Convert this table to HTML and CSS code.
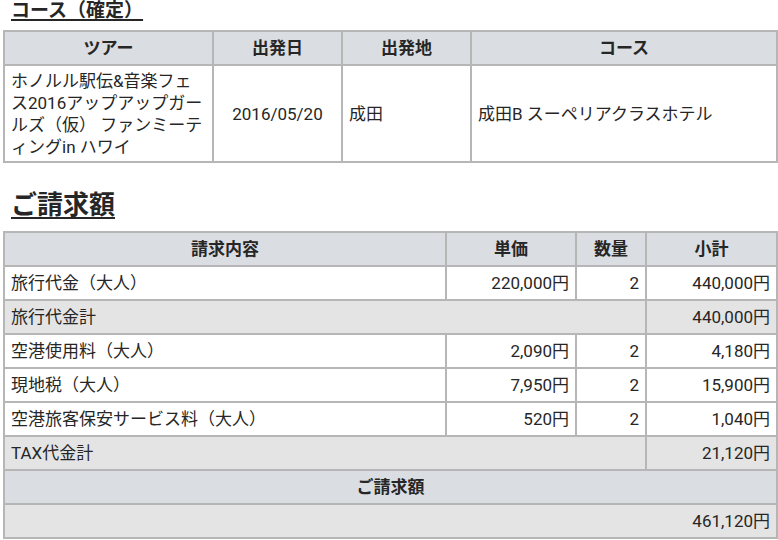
FILE: index.html
```html
<!DOCTYPE html>
<html lang="ja">
<head>
<meta charset="utf-8">
<link rel="stylesheet" href="styles.css">
</head>
<body>
<div class="page">
  <h2 class="title-sm">コース（確定）</h2>
  <table class="grid course">
    <colgroup>
      <col class="c-tour"><col class="c-date"><col class="c-from"><col class="c-course">
    </colgroup>
    <thead>
      <tr class="head"><th>ツアー</th><th>出発日</th><th>出発地</th><th>コース</th></tr>
    </thead>
    <tbody>
      <tr class="tall">
        <td>ホノルル駅伝&amp;音楽フェス2016アップアップガールズ（仮） ファンミーティングin ハワイ</td>
        <td class="center">2016/05/20</td>
        <td>成田</td>
        <td>成田B スーペリアクラスホテル</td>
      </tr>
    </tbody>
  </table>

  <h2 class="title-lg">ご請求額</h2>
  <table class="grid bill">
    <colgroup>
      <col class="c-item"><col class="c-unit"><col class="c-qty"><col class="c-sub">
    </colgroup>
    <thead>
      <tr class="head"><th>請求内容</th><th>単価</th><th>数量</th><th>小計</th></tr>
    </thead>
    <tbody>
      <tr><td>旅行代金（大人）</td><td class="num">220,000円</td><td class="num">2</td><td class="num">440,000円</td></tr>
      <tr class="total"><td colspan="3">旅行代金計</td><td class="num">440,000円</td></tr>
      <tr><td>空港使用料（大人）</td><td class="num">2,090円</td><td class="num">2</td><td class="num">4,180円</td></tr>
      <tr><td>現地税（大人）</td><td class="num">7,950円</td><td class="num">2</td><td class="num">15,900円</td></tr>
      <tr><td>空港旅客保安サービス料（大人）</td><td class="num">520円</td><td class="num">2</td><td class="num">1,040円</td></tr>
      <tr class="total"><td colspan="3">TAX代金計</td><td class="num">21,120円</td></tr>
      <tr class="head"><th colspan="4">ご請求額</th></tr>
      <tr class="total"><td colspan="4" class="num">461,120円</td></tr>
    </tbody>
  </table>
</div>
</body>
</html>
```

FILE: styles.css
```css
html, body {
  margin: 0;
  padding: 0;
  background: #ffffff;
}

body {
  font-family: Roboto, "Noto Sans CJK JP", sans-serif;
  font-size: 17px;
  color: #262626;
  text-spacing-trim: space-all;
}

.page {
  padding: 0 1px 0 3px;
}

.title-sm {
  margin: 0;
  padding-left: 8px;
  font-size: 19px;
  line-height: 22px;
  font-weight: 700;
  text-decoration: underline;
  text-decoration-thickness: 2px;
  text-underline-offset: 2px;
  height: 22px;
}

.title-lg {
  margin: 25px 0 9px;
  padding-left: 8px;
  font-size: 26px;
  line-height: 34px;
  font-weight: 700;
  text-decoration: underline;
  text-decoration-thickness: 2px;
  text-underline-offset: 3px;
}

.grid {
  border-collapse: collapse;
  table-layout: fixed;
  width: 773px;
}

.course {
  margin-top: 8px;
}

.grid th,
.grid td {
  border: 2px solid #b6b6b6;
  padding: 0 6px;
  line-height: 22px;
  vertical-align: middle;
}

.grid th {
  font-weight: 700;
  text-align: center;
}

.head {
  background: #dadde1;
  height: 34px;
}

.bill tr {
  height: 34px;
}

.tall {
  height: 97px;
}

.center {
  text-align: center;
}

.num {
  text-align: right;
}

.total {
  background: #e4e4e4;
}

.c-tour { width: 209px; }
.c-date { width: 129px; }
.c-from { width: 129px; }
.c-course { width: 306px; }

.c-item { width: 442px; }
.c-unit { width: 130px; }
.c-qty { width: 70px; }
.c-sub { width: 131px; }
```
